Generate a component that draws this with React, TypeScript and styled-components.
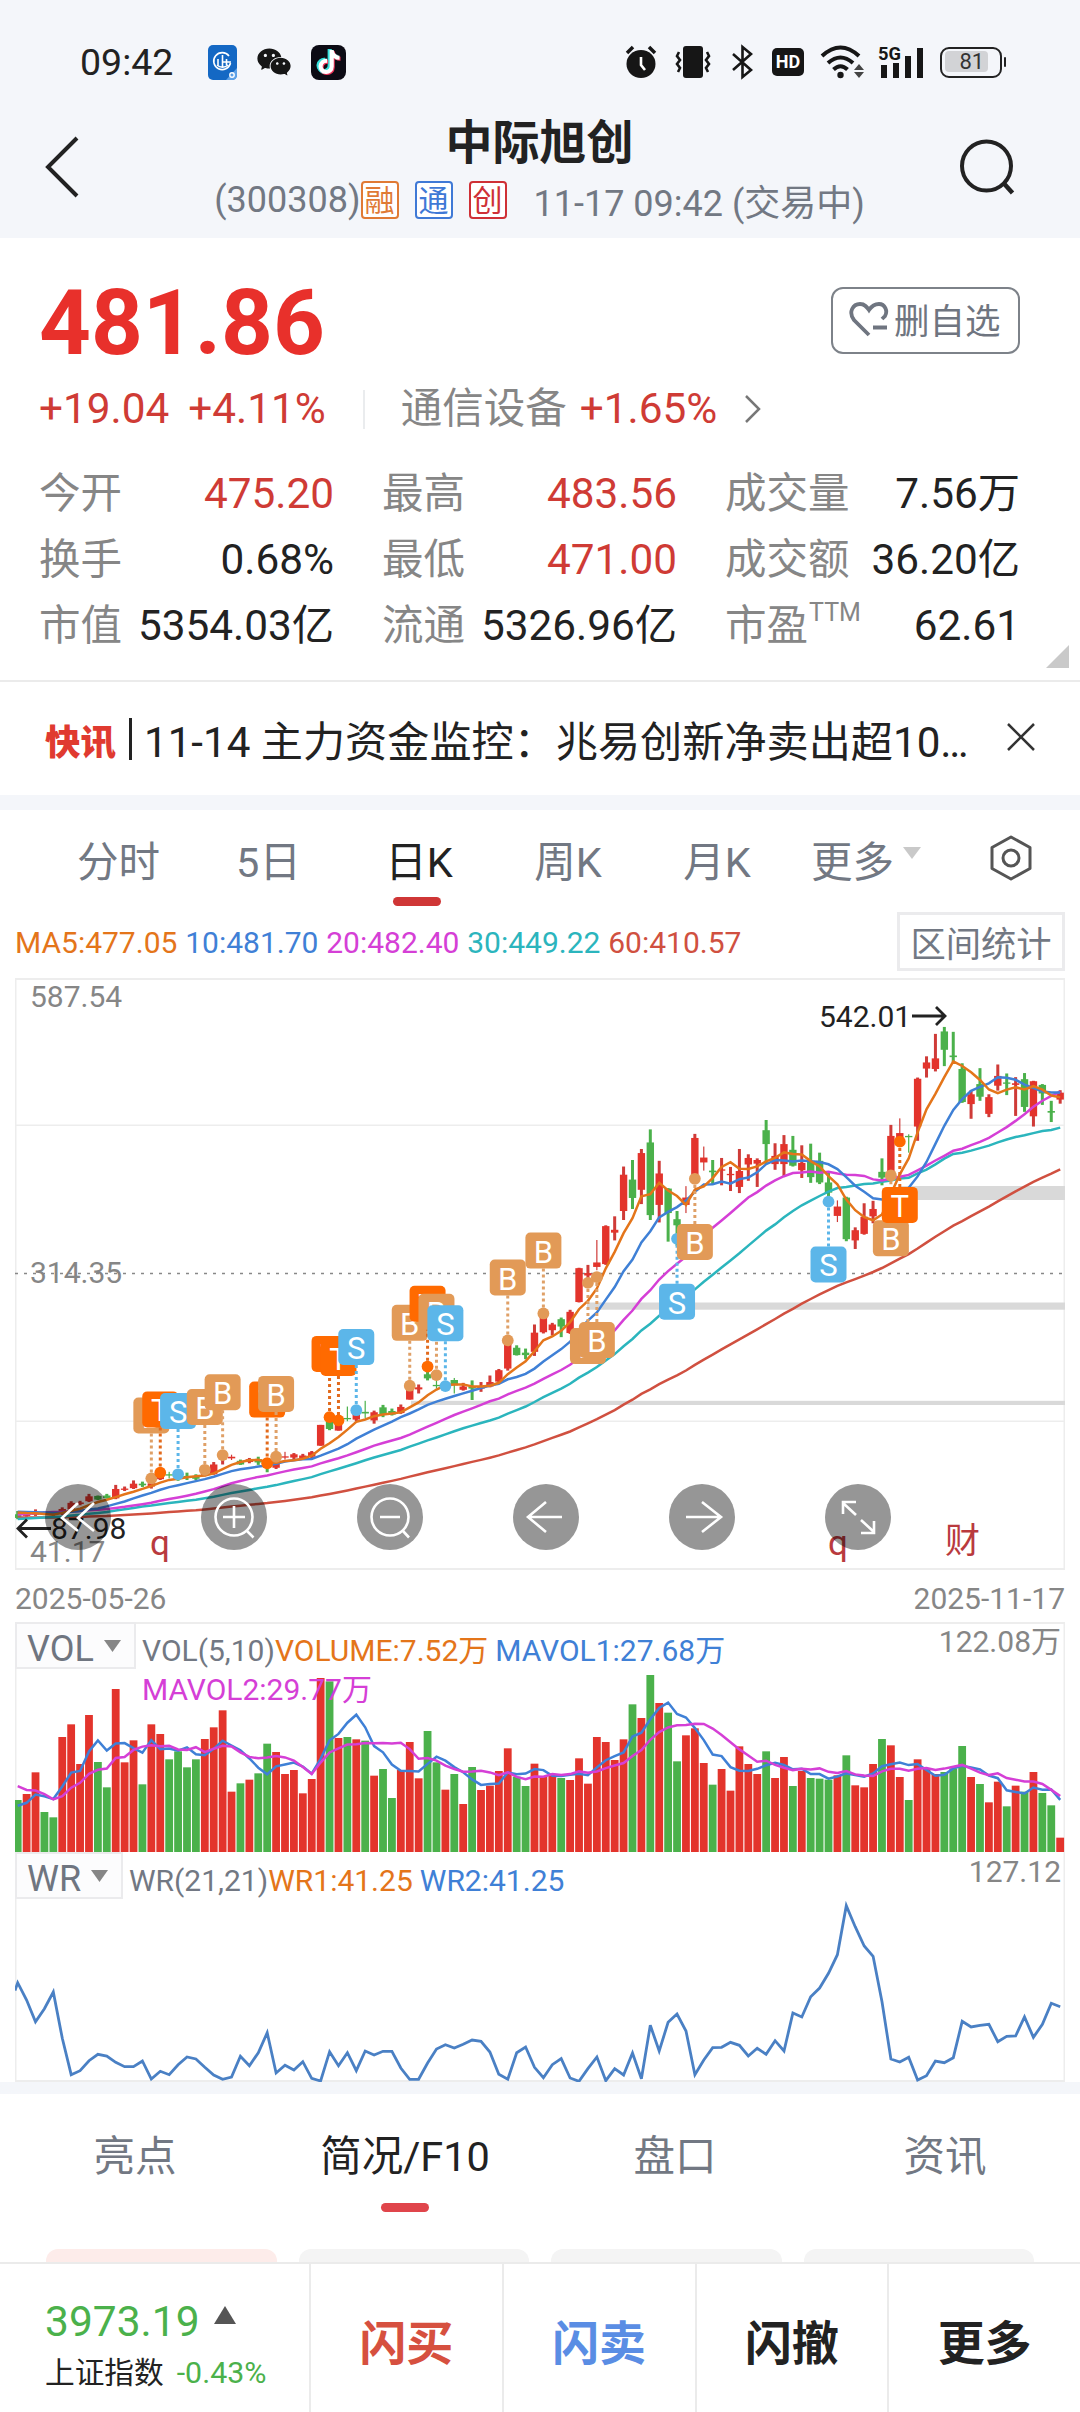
import React from 'react'
import styled, { createGlobalStyle } from 'styled-components'
import { AiFillWechat } from 'react-icons/ai'
import { FaTiktok } from 'react-icons/fa'

const RED = '#e3342c'
const GREEN = '#4bb14b'
const ORANGE = '#e4751a'
const BLUE = '#3f80d6'
const PINK = '#d53fd6'
const TEAL = '#2bb5bd'
const BRICK = '#d05040'

const GlobalStyle = createGlobalStyle`
  * { box-sizing: border-box; }
  body {
    margin: 0;
    background: #fff;
    font-family: Roboto, "Noto Sans CJK SC", sans-serif;
    color: #222;
  }
  svg { display: block; }
`

const Page = styled.div`
  width: 1080px;
  height: 2412px;
  overflow: hidden;
  display: flex;
  flex-direction: column;
  background: #fff;
`

/* ---------- header ---------- */

const Header = styled.header`
  height: 238px;
  flex: none;
  background: #f4f6fa;
`
const StatusBar = styled.div`
  height: 110px;
  padding: 14px 78px 0 80px;
  display: flex;
  align-items: center;
`
const Clock = styled.span`
  width: 128px;
  font-size: 37.5px;
  line-height: 40px;
`
const StatusGroup = styled.div<{ $gap: number; $push?: boolean }>`
  display: flex;
  align-items: center;
  gap: ${p => p.$gap}px;
  margin-left: ${p => (p.$push ? 'auto' : 0)};
`
const DouyinIcon = styled.span`
  width: 35px;
  height: 35px;
  border-radius: 8px;
  background: #0c0b14;
  color: #fff;
  display: flex;
  align-items: center;
  justify-content: center;
  svg { filter: drop-shadow(1.5px 1px 0 #f0345a) drop-shadow(-1.5px -1px 0 #36e0dc); }
`
const HdIcon = styled.span`
  width: 32px;
  height: 28px;
  border-radius: 5px;
  background: #161616;
  color: #fff;
  font-size: 18px;
  font-weight: 700;
  line-height: 28px;
  text-align: center;
`
const Battery = styled.span`
  position: relative;
  width: 62px;
  height: 31px;
  border: 2.5px solid #222;
  border-radius: 9px;
  padding: 2.5px;
  &::after {
    content: '';
    position: absolute;
    right: -6px;
    top: 8px;
    width: 2.5px;
    height: 10px;
    background: #222;
    border-radius: 2px;
  }
`
const BatteryFill = styled.span`
  display: block;
  width: 43px;
  height: 21px;
  border-radius: 4px;
  background: #d2d3d6;
  padding-left: 15px;
  font-size: 22px;
  line-height: 22px;
  color: #333;
`
const TitleBar = styled.div`
  height: 128px;
  padding: 0 65px 0 44px;
  display: flex;
  justify-content: space-between;
`
const TitleIcon = styled.div`
  padding-top: 25px;
`
const TitleText = styled.div`
  display: flex;
  flex-direction: column;
  align-items: center;
  padding: 3px 0 0 40px;
`
const StockName = styled.h1`
  margin: 0;
  padding-left: 0;
  font-size: 47px;
  font-weight: 700;
  line-height: 60px;
`
const SubTitle = styled.div`
  display: flex;
  align-items: center;
  height: 54px;
  font-size: 36px;
  color: #727883;
  white-space: pre;
`
const Tag = styled.span<{ $color: string }>`
  width: 38px;
  height: 38px;
  margin-right: 16px;
  border: 2px solid ${p => p.$color};
  border-radius: 4px;
  background: #fff;
  color: ${p => p.$color};
  font-size: 30px;
  line-height: 35px;
  text-align: center;
  & + div { margin-left: 11px; }
`

/* ---------- quote ---------- */

const Quote = styled.section`
  position: relative;
  flex: none;
  height: 444px;
  padding: 39px 59px 0 39px;
  border-bottom: 2px solid #ebebeb;
`
const PriceRow = styled.div`
  display: flex;
  justify-content: space-between;
  align-items: center;
  height: 88px;
  padding-right: 1px;
`
const Price = styled.span`
  padding-top: 3px;
  font-size: 90.5px;
  font-weight: 700;
  line-height: 88px;
  color: #e8302b;
`
const WatchButton = styled.button`
  width: 189px;
  height: 67px;
  margin-top: -2px;
  padding: 0 0 4px 16px;
  border: 2px solid #7d8289;
  border-radius: 12px;
  background: #fff;
  display: flex;
  align-items: center;
  gap: 5px;
  font: inherit;
  font-size: 35.5px;
  color: #6f7580;
  svg { margin-top: 2px; }
`
const ChangeRow = styled.div`
  display: flex;
  align-items: center;
  height: 60px;
  margin-top: 14px;
  font-size: 42.3px;
  line-height: 60px;
  color: #cf3b35;
`
const Sector = styled.div`
  display: flex;
  align-items: center;
  margin-left: 37px;
  padding-left: 38px;
  position: relative;
  &::before {
    content: '';
    position: absolute;
    left: 0;
    width: 2px;
    height: 39px;
    background: #eaecee;
  }
  em {
    font-style: normal;
    font-size: 41.5px;
    color: #868686;
    margin-right: 13px;
  }
  svg { margin-left: 27px; }
`
const Pct = styled.span`
  margin-left: 19px;
`
const StatGrid = styled.div`
  margin-top: 22px;
  display: grid;
  grid-template-columns: repeat(3, 295px);
  column-gap: 48px;
  grid-auto-rows: 66px;
`
const Stat = styled.div<{ $up?: boolean }>`
  display: flex;
  justify-content: space-between;
  line-height: 66px;
  font-size: 42.3px;
  white-space: nowrap;
  color: ${p => (p.$up ? '#cf3b35' : '#222')};
`
const StatLabel = styled.span`
  display: flex;
  font-size: 41.5px;
  color: #868686;
  sup {
    font-size: 25px;
    line-height: 40px;
    margin-left: 1px;
  }
`
const Corner = styled.svg`
  position: absolute;
  right: 11px;
  bottom: 12px;
`

/* ---------- news ---------- */

const News = styled.section`
  flex: none;
  height: 128px;
  padding: 0 45px 0 45px;
  border-bottom: 15px solid #f4f6fa;
  display: flex;
  align-items: center;
  font-size: 42px;
  white-space: nowrap;
  & > svg { margin-top: -3px; }
`
const Flash = styled.b`
  width: 84px;
  padding-top: 1px;
  font-size: 35.5px;
  font-weight: 900;
  color: #e03a30;
`
const NewsText = styled.span`
  border-left: 3px solid #222;
  line-height: 42px;
  padding: 9px 0 0 12px;
  height: 42px;
  display: flex;
  align-items: center;
  flex: 1;
  font-size: 42.15px;
`

/* ---------- tabs ---------- */

const PeriodTabs = styled.nav`
  flex: none;
  height: 98px;
  padding: 0 48px 0 44px;
  display: grid;
  grid-template-columns: repeat(5, 149px) 140px 1fr;
`
const Tab = styled.div<{ $active?: boolean; $bar: string }>`
  position: relative;
  display: flex;
  justify-content: center;
  font-size: 41.5px;
  line-height: 105px;
  color: ${p => (p.$active ? '#222' : '#727883')};
  &::after {
    content: '';
    display: ${p => (p.$active ? 'block' : 'none')};
    position: absolute;
    bottom: 9px;
    width: 48px;
    height: 9px;
    border-radius: 5px;
    background: ${p => p.$bar};
  }
`
const TabLabel = styled.span<{ $shift: number }>`
  padding-left: ${p => p.$shift}px;
`
const MoreTab = styled.div`
  display: flex;
  padding-left: 22px;
  font-size: 41.5px;
  line-height: 105px;
  color: #727883;
  svg { margin: 37px 0 0 9px; flex: none; }
`
const Settings = styled.div`
  justify-self: end;
  padding-top: 25px;
`

/* ---------- chart ---------- */

const MaRow = styled.div`
  flex: none;
  height: 70px;
  padding: 4px 15px 0 15px;
  display: flex;
  gap: 7.8px;
  font-size: 30px;
  line-height: 62px;
`
const Colored = styled.span<{ $color: string }>`
  color: ${p => p.$color};
`
const RangeButton = styled.div`
  width: 168px;
  height: 59px;
  margin-left: auto;
  border: 3px solid #ebebed;
  font-size: 35.3px;
  line-height: 60px;
  text-align: center;
  color: #727883;
`
const ChartBox = styled.div<{ $h: number }>`
  position: relative;
  flex: none;
  width: 1050px;
  height: ${p => p.$h}px;
  margin-left: 15px;
`
const Tools = styled.div`
  position: absolute;
  left: 30px;
  top: 506px;
  display: flex;
  gap: 90px;
`
const Tool = styled.div`
  width: 66px;
  height: 66px;
  border-radius: 50%;
  background: rgba(0, 0, 0, 0.41);
`
const Dates = styled.div`
  flex: none;
  height: 53px;
  padding: 0 15px;
  display: flex;
  justify-content: space-between;
  font-size: 30px;
  line-height: 60px;
  color: #868686;
`
const Legend = styled.div`
  position: absolute;
  left: 0;
  top: 0;
  display: flex;
  font-size: 30px;
  line-height: 39px;
  color: #727883;
`
const Picker = styled.div<{ $w: number }>`
  width: ${p => p.$w}px;
  height: 47px;
  margin-right: 6px;
  border: 2px solid #ebebed;
  background: #fcfcfd;
  display: flex;
  padding-left: 10px;
  gap: 10px;
  font-size: 36px;
  line-height: 50px;
  color: #6f7580;
  svg { margin-top: 16px; }
`
const LegendText = styled.div`
  width: 620px;
  padding-top: 9px;
  span { margin-right: 7px; }
`
const MaxLabel = styled.div`
  position: absolute;
  right: 4px;
  top: 0;
  font-size: 30px;
  line-height: 39px;
  color: #868686;
`

/* ---------- bottom ---------- */

const InfoTabs = styled.nav`
  flex: none;
  height: 132px;
  border-top: 12px solid #f4f6fa;
  display: grid;
  grid-template-columns: repeat(4, 1fr);
  ${Tab} {
    line-height: 125px;
    &::after { bottom: 7px; }
  }
`
const Chips = styled.div`
  flex: none;
  height: 48px;
  padding: 35px 46px 0;
  display: grid;
  grid-template-columns: repeat(4, 1fr);
  gap: 22px;
`
const Chip = styled.div<{ $on?: boolean }>`
  border-radius: 12px 12px 0 0;
  background: ${p => (p.$on ? '#fdecea' : '#f4f4f4')};
`
const BottomBar = styled.footer`
  flex: none;
  height: 150px;
  border-top: 2px solid #ebebeb;
  display: grid;
  grid-template-columns: 309px repeat(4, 1fr);
`
const IndexCell = styled.div`
  padding: 30px 0 0 45px;
  white-space: nowrap;
`
const IndexValue = styled.div`
  display: flex;
  gap: 14px;
  font-size: 42.5px;
  line-height: 56px;
  color: ${GREEN};
  svg { margin-top: 12px; }
`
const IndexName = styled.div`
  font-size: 29.7px;
  line-height: 46px;
  span {
    margin-left: 13px;
    font-size: 30.3px;
    color: ${GREEN};
  }
`
const Action = styled.div<{ $color: string }>`
  border-left: 2px solid #ebebeb;
  text-align: center;
  font-size: 47px;
  font-weight: 700;
  line-height: 159px;
  color: ${p => p.$color};
`

/* ---------- data ---------- */

// u(p)/d(own), high, body top, body bottom, low; vertical chart ticks from the top
type Candle = [string, number, number, number, number]
const candles: Candle[] = [
  ['d', 1350, 1358, 1367, 1370], ['u', 1354, 1357, 1362, 1364], ['u', 1346, 1354, 1359, 1362],
  ['d', 1350, 1353, 1358, 1360], ['d', 1350, 1354, 1359, 1362], ['u', 1341, 1345, 1357, 1360],
  ['u', 1326, 1330, 1346, 1350], ['u', 1325, 1329, 1333, 1336], ['u', 1308, 1314, 1326, 1328],
  ['d', 1312, 1313, 1322, 1323], ['d', 1308, 1312, 1318, 1320], ['u', 1286, 1296, 1319, 1321],
  ['u', 1290, 1295, 1298, 1301], ['u', 1275, 1283, 1294, 1296], ['d', 1278, 1283, 1287, 1291],
  ['u', 1268, 1282, 1290, 1295], ['u', 1248, 1255, 1272, 1274], ['d', 1254, 1260, 1262, 1270],
  ['d', 1256, 1260, 1268, 1276], ['d', 1256, 1264, 1269, 1274], ['d', 1260, 1266, 1271, 1274],
  ['u', 1238, 1245, 1262, 1265], ['u', 1230, 1236, 1260, 1261], ['u', 1210, 1216, 1224, 1236],
  ['u', 1212, 1217, 1221, 1225], ['d', 1224, 1227, 1236, 1237], ['u', 1220, 1223, 1230, 1233],
  ['d', 1217, 1223, 1231, 1237], ['d', 1225, 1232, 1244, 1255], ['u', 1210, 1225, 1244, 1247],
  ['u', 1205, 1216, 1219, 1224], ['u', 1208, 1211, 1219, 1226], ['u', 1210, 1214, 1221, 1225],
  ['u', 1203, 1206, 1217, 1221], ['u', 1139, 1139, 1190, 1190], ['d', 1125, 1130, 1149, 1152],
  ['u', 1128, 1135, 1153, 1153], ['d', 1094, 1122, 1124, 1130], ['u', 1102, 1110, 1126, 1130],
  ['d', 1080, 1107, 1111, 1122], ['u', 1104, 1108, 1128, 1136], ['d', 1090, 1096, 1114, 1120],
  ['d', 1099, 1105, 1114, 1116], ['u', 1089, 1095, 1110, 1112], ['u', 1040, 1050, 1077, 1077],
  ['u', 1040, 1047, 1052, 1062], ['d', 1000, 1015, 1025, 1030], ['d', 1020, 1041, 1044, 1050],
  ['u', 1038, 1043, 1050, 1053], ['d', 1024, 1029, 1042, 1062], ['u', 1036, 1045, 1053, 1055],
  ['d', 1030, 1046, 1050, 1078], ['u', 1034, 1045, 1050, 1058], ['u', 1018, 1034, 1045, 1047],
  ['u', 1002, 1005, 1033, 1034], ['u', 932, 940, 1001, 1006], ['d', 944, 950, 968, 969],
  ['d', 952, 962, 968, 978], ['u', 893, 913, 960, 970], ['u', 865, 870, 912, 915],
  ['u', 889, 893, 907, 920], ['d', 876, 880, 898, 924], ['u', 857, 862, 914, 916],
  ['u', 754, 755, 838, 839], ['u', 747, 767, 773, 800], ['u', 686, 741, 752, 760],
  ['u', 650, 652, 745, 747], ['u', 628, 661, 668, 687], ['u', 506, 526, 615, 637],
  ['d', 490, 538, 583, 610], ['u', 463, 473, 563, 598], ['d', 415, 447, 625, 637],
  ['u', 492, 523, 600, 643], ['d', 559, 560, 620, 690], ['d', 615, 635, 650, 700],
  ['u', 554, 582, 600, 620], ['u', 426, 436, 536, 545], ['u', 457, 484, 496, 516],
  ['d', 490, 516, 520, 550], ['u', 485, 513, 516, 552], ['u', 507, 524, 527, 566],
  ['u', 463, 517, 556, 571], ['u', 476, 485, 501, 541], ['u', 486, 490, 499, 556],
  ['d', 392, 417, 451, 500], ['u', 449, 480, 500, 514], ['u', 429, 451, 500, 530],
  ['d', 431, 465, 504, 506], ['u', 454, 497, 515, 534], ['d', 450, 493, 532, 546],
  ['d', 472, 492, 545, 549], ['d', 520, 545, 570, 585], ['u', 589, 604, 627, 642],
  ['d', 580, 582, 684, 689], ['u', 655, 662, 687, 708], ['u', 596, 629, 671, 673],
  ['u', 590, 610, 628, 645], ['d', 486, 519, 533, 552], ['u', 404, 431, 520, 540],
  ['u', 388, 424, 440, 445], ['d', 427, 431, 433, 472], ['u', 288, 291, 408, 443],
  ['u', 236, 251, 266, 288], ['u', 181, 241, 267, 273], ['d', 164, 175, 220, 260],
  ['d', 176, 234, 238, 250], ['d', 253, 267, 348, 350], ['u', 319, 329, 353, 389],
  ['d', 265, 304, 335, 345], ['u', 329, 336, 377, 385], ['u', 256, 284, 308, 320],
  ['d', 278, 300, 303, 331], ['u', 287, 302, 306, 382], ['d', 277, 292, 360, 372],
  ['u', 296, 297, 383, 408], ['d', 304, 306, 327, 355], ['d', 345, 370, 374, 397],
  ['u', 319, 325, 342, 352],
]
const thinWicks = [17, 24, 30, 37, 39, 47, 49, 65, 75, 77, 92, 99, 100]

// closes before the first visible day, needed by the long averages
const history: number[] = [
  ...Array(30).fill(1362),
  ...Array(15).fill(1390),
  ...Array(15).fill(1350),
]

const volumes = [
  690, 672, 607, 726, 742, 501, 463, 582, 435, 576, 652, 357, 577, 511, 643, 463, 492, 568, 544, 592,
  568, 507, 472, 421, 665, 640, 629, 610, 521, 546, 612, 600, 670, 627, 324, 334, 504, 501, 508, 512,
  617, 597, 684, 600, 516, 625, 483, 577, 659, 612, 702, 591, 660, 647, 603, 535, 620, 648, 581, 618,
  618, 624, 630, 565, 641, 501, 516, 570, 508, 403, 444, 315, 399, 428, 574, 496, 475, 579, 644, 597,
  662, 529, 582, 612, 544, 624, 561, 648, 603, 624, 626, 629, 616, 556, 646, 652, 582, 507, 526, 621,
  690, 568, 595, 612, 606, 595, 528, 621, 642, 697, 635, 709, 647, 665, 606, 669, 706, 803,
]
const volHistory = [560, 590, 620, 580, 600, 715, 730, 700, 700]

const wr = [
  1238, 1290, 1355, 1316, 1266, 1405, 1514, 1502, 1472, 1453, 1458, 1477, 1490, 1490, 1473, 1527, 1504,
  1514, 1484, 1461, 1467, 1492, 1515, 1528, 1521, 1459, 1487, 1448, 1388, 1509, 1486, 1500, 1475, 1525,
  1533, 1445, 1487, 1448, 1502, 1443, 1455, 1444, 1444, 1494, 1528, 1528, 1479, 1437, 1424, 1434, 1423,
  1410, 1414, 1446, 1513, 1528, 1448, 1431, 1492, 1523, 1484, 1466, 1524, 1534, 1496, 1461, 1532, 1496,
  1515, 1449, 1526, 1366, 1443, 1357, 1332, 1383, 1514, 1470, 1433, 1432, 1417, 1426, 1458, 1435, 1453,
  1412, 1443, 1329, 1341, 1280, 1254, 1210, 1154, 1007, 1070, 1128, 1159, 1295, 1467, 1476, 1462, 1530,
  1517, 1473, 1478, 1463, 1354, 1371, 1366, 1363, 1415, 1399, 1398, 1341, 1402, 1363, 1300, 1310,
]

// day, letter, dot position, badge position
type Mark = [number, 'B' | 'S' | 'T', number, number]
const marks: Mark[] = [
  [15, 'B', 1270, 1116], [16, 'T', 1256, 1101], [18, 'S', 1260, 1105], [21, 'B', 1249, 1095],
  [23, 'B', 1213, 1059], [28, 'T', 1233, 1077], [29, 'B', 1217, 1063], [35, 'T', 1120, 965],
  [36, 'T', 1128, 975], [38, 'S', 1103, 948], [44, 'B', 1043, 889], [46, 'T', 996, 842],
  [47, 'B', 1017, 862], [48, 'S', 1044, 890], [55, 'B', 932, 778], [59, 'B', 866, 712],
  [64, 'B', 791, 946], [65, 'B', 777, 931], [74, 'S', 683, 837], [76, 'B', 536, 691],
  [91, 'S', 592, 746], [98, 'B', 528, 682], [99, 'T', 445, 600],
]
const markColor = { B: '#e29a57', S: '#5cb6e9', T: '#ff6a00' }
const stemColor = { B: '#dfa067', S: '#5cb6e9', T: '#e26a1c' }

const dayX = (i: number) => 2.7 + i * 8.91
const priceY = (v: number) => v / 2.45 - 18
const volY = (v: number) => v / 3 - 52
const wrY = (v: number) => v / 3 - 282

const average = (values: number[], before: number[], days: number) => {
  const all = [...before, ...values]
  return values.map((_, i) => {
    const end = i + before.length + 1
    const part = all.slice(Math.max(0, end - days), end)
    return part.reduce((a, b) => a + b, 0) / part.length
  })
}
const toPoints = (values: number[], y: (v: number) => number) =>
  values.map((v, i) => `${dayX(i).toFixed(1)},${y(v).toFixed(1)}`).join(' ')

const closes = candles.map(c => (c[0] === 'u' ? c[2] : c[3]))
const maLines: [number, string][] = [[60, BRICK], [30, TEAL], [20, PINK], [10, BLUE], [5, ORANGE]]

const KLine = () => (
  <svg width="1050" height="592" fontFamily="Roboto, 'Noto Sans CJK SC', sans-serif">
    <g stroke="#ededed" strokeWidth="2" fill="none">
      <rect x="0.5" y="1" width="1049" height="590" />
      <path d="M0 147.3H1050M0 443.3H1050" strokeWidth="1.5" />
    </g>
    <path d="M0 295.5H1050" stroke="#888" strokeWidth="1.3" strokeDasharray="3 6" />
    <g fill="#868686" fontSize="30">
      <text x="15" y="29">587.54</text>
      <text x="15" y="304.5">314.35</text>
      <text x="15" y="584">41.17</text>
    </g>
    <g fill="#d9d9d9">
      <rect x="396" y="422.8" width="654" height="4.2" />
      <rect x="572" y="324.5" width="478" height="7.2" />
      <rect x="884" y="208" width="166" height="14" />
    </g>
    {candles.map(([dir, high, top, bottom, low], i) => {
      const color = dir === 'u' ? RED : GREEN
      const wick = thinWicks.includes(i) ? 1.2 : 3
      return (
        <g key={i} fill={color}>
          <rect x={dayX(i) - wick / 2} y={priceY(high)} width={wick} height={(low - high) / 2.45} fill={dir === 'u' ? '#cf3b38' : GREEN} />
          <rect x={dayX(i) - 3.7} y={priceY(top)} width="7.4" height={Math.max(1.3, (bottom - top) / 2.45)} />
        </g>
      )
    })}
    {maLines.map(([days, color]) => (
      <polyline key={days} points={toPoints(average(closes, history, days), priceY)} fill="none" stroke={color} strokeWidth="2.5" />
    ))}
    {marks.map(([day, letter, dot, tag]) => (
      <g key={day}>
        <path d={`M${dayX(day)} ${priceY(tag)}V${priceY(dot)}`} stroke={stemColor[letter]} strokeWidth="3" strokeDasharray="3 3" />
        <circle cx={dayX(day)} cy={priceY(dot)} r="5.9" fill={markColor[letter]} />
        <rect x={dayX(day) - 18} y={priceY(tag) - 18} width="36" height="36" rx="5" fill={markColor[letter]} />
        <text x={dayX(day)} y={priceY(tag) + 12} fontSize="31" textAnchor="middle" fill="#fff">{letter}</text>
      </g>
    ))}
    <g stroke="#222" strokeWidth="2.8" fill="none">
      <path d="M36 550.5H3M12 541.5L3 550.5L12 559.5" />
      <path d="M897 38H930M921 29L930 38L921 47" />
    </g>
    <g fill="#222" fontSize="30">
      <text x="36" y="561">87.98</text>
      <text x="804" y="48.5">542.01</text>
    </g>
    <g fill="#b93a3e" fontSize="35">
      <text x="135" y="577">q</text>
      <text x="813" y="577">q</text>
      <text x="930" y="575">财</text>
    </g>
  </svg>
)

const Volume = () => (
  <svg width="1050" height="230">
    <path d="M0.5 230V1H1049.5V230" stroke="#ededed" strokeWidth="2" fill="none" />
    {volumes.map((v, i) => {
      const left = Math.max(0, dayX(i) - 3.9)
      return (
        <rect key={i} x={left} y={volY(v)} width={dayX(i) + 3.9 - left} height={230 - volY(v)} fill={candles[i][0] === 'u' ? RED : GREEN} />
      )
    })}
    <polyline points={toPoints(average(volumes, volHistory, 5), volY)} fill="none" stroke={BLUE} strokeWidth="2.5" />
    <polyline points={toPoints(average(volumes, volHistory, 10), volY)} fill="none" stroke={PINK} strokeWidth="2.5" />
  </svg>
)

const WilliamsR = () => (
  <svg width="1050" height="230">
    <path d="M0.5 0V229H1049.5V0" stroke="#ededed" strokeWidth="2" fill="none" />
    <polyline points={`0,138.5 ${toPoints(wr, wrY)}`} fill="none" stroke="#4a80c4" strokeWidth="2.8" />
  </svg>
)

const Down = ({ w, h, color }: { w: number; h: number; color: string }) => (
  <svg width={w} height={h}>
    <path d={`M0 0H${w}L${w / 2} ${h}Z`} fill={color} />
  </svg>
)

const toolPaths = [
  'M33 19L17 34L33 47M49 19L33 34L49 47',
  'M46 47L52.5 53.5M22 33H44M33 22V44',
  'M46 47L52 53.5M23 33H43',
  'M33 18L15 33L33 48M15 33H49',
  'M33 18L52 33L33 48M17 33H51',
  'M31 31L18 19M18 30V18H31M36 36L49 48M49 37V49H36',
]

const stats = [
  { label: '今开', value: '475.20', up: true },
  { label: '最高', value: '483.56', up: true },
  { label: '成交量', value: '7.56万' },
  { label: '换手', value: '0.68%' },
  { label: '最低', value: '471.00', up: true },
  { label: '成交额', value: '36.20亿' },
  { label: '市值', value: '5354.03亿' },
  { label: '流通', value: '5326.96亿' },
  { label: '市盈', sup: 'TTM', value: '62.61' },
]

const periods = [
  { name: '分时', shift: 0 },
  { name: '5日', shift: 2 },
  { name: '日K', shift: 5 },
  { name: '周K', shift: 5 },
  { name: '月K', shift: 5 },
]

const StatusIcon = styled.svg<{ $l?: number; $r: number }>`
  overflow: visible;
  margin: 0 ${p => p.$r}px 0 ${p => p.$l || 0}px;
`

const StatusIcons = () => (
  <StatusGroup $gap={0} $push>
    <StatusIcon $r={18} width="32" height="34" viewBox="0 0 32 34">
      <ellipse cx="16" cy="19" rx="14.500" ry="14" fill="#161616" />
      <path d="M2 8L8 2M30 8L24 2" stroke="#161616" strokeWidth="3.500" />
      <path d="M16 12V20L20 25" stroke="#fff" strokeWidth="2.600" fill="none" />
    </StatusIcon>
    <StatusIcon $r={21} width="36" height="34" viewBox="0 0 36 34">
      <rect x="8" y="1" width="20" height="32" rx="3" fill="#161616" />
      <path d="M4 7L2 11L5 15L2 19L5 23L3 27M32 7L34 11L31 15L34 19L31 23L33 27" stroke="#161616" strokeWidth="2.600" fill="none" />
    </StatusIcon>
    <StatusIcon $r={19} width="21" height="34" viewBox="0 0 21 34">
      <path d="M1 9L19 25L10.500 32V2L19 9L1 25" stroke="#161616" strokeWidth="2.600" fill="none" />
    </StatusIcon>
    <HdIcon>HD</HdIcon>
    <StatusIcon $l={16} $r={15} width="44" height="34" viewBox="0 0 44 34">
      <g stroke="#161616" strokeWidth="4" fill="none">
        <path d="M2 11Q20.500 -6 39 11" />
        <path d="M8 18Q20.500 7 33 18" />
        <path d="M13.500 24.500Q20.500 18 27.500 24.500" />
      </g>
      <circle cx="20.500" cy="30" r="3.200" fill="#161616" />
      <path d="M34 25L39 19L44 25ZM34 27H44L39 33Z" fill="#444" />
    </StatusIcon>
    <StatusIcon $r={17} width="44" height="34" viewBox="0 0 44 34">
      <text x="-1" y="15" fontSize="19" fontWeight="700" textLength="23" lengthAdjust="spacingAndGlyphs" fill="#161616">5G</text>
      <path d="M5 20V33M17 18V33M29 11V33M41 3V33" stroke="#161616" strokeWidth="6" />
    </StatusIcon>
    <Battery><BatteryFill>81</BatteryFill></Battery>
  </StatusGroup>
)

function App() {
  return (
    <Page>
      <GlobalStyle />
      <Header>
        <StatusBar>
          <Clock>09:42</Clock>
          <StatusGroup $gap={18}>
            <svg width="29" height="35" viewBox="0 0 29 35">
              <rect width="29" height="35" rx="5" fill="#1468c4" />
              <path d="M29 23V30Q29 35 24 35H18Z" fill="#5fa2e8" />
              <path d="M21 11A8.500 8.500 0 1 0 22.500 18M14 17H23M14.500 10V23M10 14V20M18.500 14V20M9 20C12 23 17 23 20 20" stroke="#fff" strokeWidth="1.600" fill="none" />
              <circle cx="24" cy="30" r="2.200" fill="none" stroke="#fff" strokeWidth="1.400" />
            </svg>
            <AiFillWechat size={38} color="#161616" />
            <DouyinIcon><FaTiktok size={24} /></DouyinIcon>
          </StatusGroup>
          <StatusIcons />
        </StatusBar>
        <TitleBar>
          <TitleIcon>
            <svg width="36" height="64" fill="none" stroke="#222" strokeWidth="4">
              <path d="M33 3L4 32L33 61" />
            </svg>
          </TitleIcon>
          <TitleText>
            <StockName>中际旭创</StockName>
            <SubTitle>
              <span>(300308)</span>
              <Tag $color="#e07a34">融</Tag>
              <Tag $color="#3f79d6">通</Tag>
              <Tag $color="#cf3036">创</Tag>
              <div>11-17 09:42 (交易中)</div>
            </SubTitle>
          </TitleText>
          <TitleIcon>
            <svg width="56" height="64" fill="none" stroke="#222" strokeWidth="4">
              <circle cx="27.500" cy="31" r="24.500" />
              <path d="M44.500 48L53.500 58" strokeWidth="4.500" />
            </svg>
          </TitleIcon>
        </TitleBar>
      </Header>

      <Quote>
        <PriceRow>
          <Price>481.86</Price>
          <WatchButton>
            <svg width="40" height="36" fill="none" stroke="#6f7580" strokeWidth="3.800">
              <path d="M20 34L5 19C-1 11 4 3 11 3C16 3 18 6 20 9C22 6 25 3 30 3C36 3 39 10 36 15L33 18" />
              <path d="M24 26.500H38" strokeWidth="4" />
            </svg>
            删自选
          </WatchButton>
        </PriceRow>
        <ChangeRow>
          <span>+19.04</span>
          <Pct>+4.11%</Pct>
          <Sector>
            <em>通信设备</em>
            +1.65%
            <svg width="18" height="30" fill="none" stroke="#777" strokeWidth="2.500">
              <path d="M2 2L15 15L2 28" />
            </svg>
          </Sector>
        </ChangeRow>
        <StatGrid>
          {stats.map(s => (
            <Stat key={s.label} $up={s.up}>
              <StatLabel>{s.label}{s.sup && <sup>{s.sup}</sup>}</StatLabel>
              <span>{s.value}</span>
            </Stat>
          ))}
        </StatGrid>
        <Corner width="23" height="23"><path d="M23 0V23H0Z" fill="#c9c9c9" /></Corner>
      </Quote>

      <News>
        <Flash>快讯</Flash>
        <NewsText>11-14 主力资金监控：兆易创新净卖出超10…</NewsText>
        <svg width="28" height="28" fill="none" stroke="#333" strokeWidth="2.500">
          <path d="M1 1L27 27M27 1L1 27" />
        </svg>
      </News>

      <PeriodTabs>
        {periods.map(t => (
          <Tab key={t.name} $active={t.name === '日K'} $bar="#cf3636">
            <TabLabel $shift={t.shift}>{t.name}</TabLabel>
          </Tab>
        ))}
        <MoreTab>更多<Down w={18} h={12} color="#c9c9c9" /></MoreTab>
        <Settings>
          <svg width="42" height="46" fill="none" stroke="#555" strokeWidth="3">
            <path d="M21 2L40 12.500V33.500L21 44L2 33.500V12.500Z" strokeLinejoin="round" />
            <circle cx="21" cy="23" r="8" />
          </svg>
        </Settings>
      </PeriodTabs>

      <MaRow>
        <Colored $color={ORANGE}>MA5:477.05</Colored>
        <Colored $color={BLUE}>10:481.70</Colored>
        <Colored $color={PINK}>20:482.40</Colored>
        <Colored $color={TEAL}>30:449.22</Colored>
        <Colored $color={BRICK}>60:410.57</Colored>
        <RangeButton>区间统计</RangeButton>
      </MaRow>

      <ChartBox $h={591}>
        <KLine />
        <Tools>
          {toolPaths.map((d, i) => (
            <Tool key={d}>
              <svg width="66" height="66" fill="none" stroke="#fff" strokeWidth="2.600">
                <path d={d} />
                {(i === 1 || i === 2) && <circle cx="33" cy="33" r="18.500" />}
              </svg>
            </Tool>
          ))}
        </Tools>
      </ChartBox>
      <Dates>
        <span>2025-05-26</span>
        <span>2025-11-17</span>
      </Dates>
      <ChartBox $h={230}>
        <Volume />
        <Legend>
          <Picker $w={121}>VOL<Down w={17} h={12} color="#868686" /></Picker>
          <LegendText>
            VOL(5,10)<Colored $color={ORANGE}>VOLUME:7.52万</Colored>
            <Colored $color={BLUE}>MAVOL1:27.68万</Colored>
            <Colored $color={PINK}>MAVOL2:29.77万</Colored>
          </LegendText>
        </Legend>
        <MaxLabel>122.08万</MaxLabel>
      </ChartBox>
      <ChartBox $h={230}>
        <WilliamsR />
        <Legend>
          <Picker $w={108}>WR<Down w={17} h={12} color="#868686" /></Picker>
          <LegendText>
            WR(21,21)<Colored $color={ORANGE}>WR1:41.25</Colored>
            <Colored $color={BLUE}>WR2:41.25</Colored>
          </LegendText>
        </Legend>
        <MaxLabel>127.12</MaxLabel>
      </ChartBox>

      <InfoTabs>
        {['亮点', '简况/F10', '盘口', '资讯'].map(t => (
          <Tab key={t} $active={t === '简况/F10'} $bar="#e0454b">{t}</Tab>
        ))}
      </InfoTabs>
      <Chips>
        <Chip $on />
        <Chip />
        <Chip />
        <Chip />
      </Chips>

      <BottomBar>
        <IndexCell>
          <IndexValue>
            3973.19
            <svg width="22" height="18"><path d="M11 0L22 18H0Z" fill="#555" /></svg>
          </IndexValue>
          <IndexName>上证指数<span>-0.43%</span></IndexName>
        </IndexCell>
        <Action $color="#d6503f">闪买</Action>
        <Action $color="#5a8de4">闪卖</Action>
        <Action $color="#222">闪撤</Action>
        <Action $color="#222">更多</Action>
      </BottomBar>
    </Page>
  )
}

export default App
